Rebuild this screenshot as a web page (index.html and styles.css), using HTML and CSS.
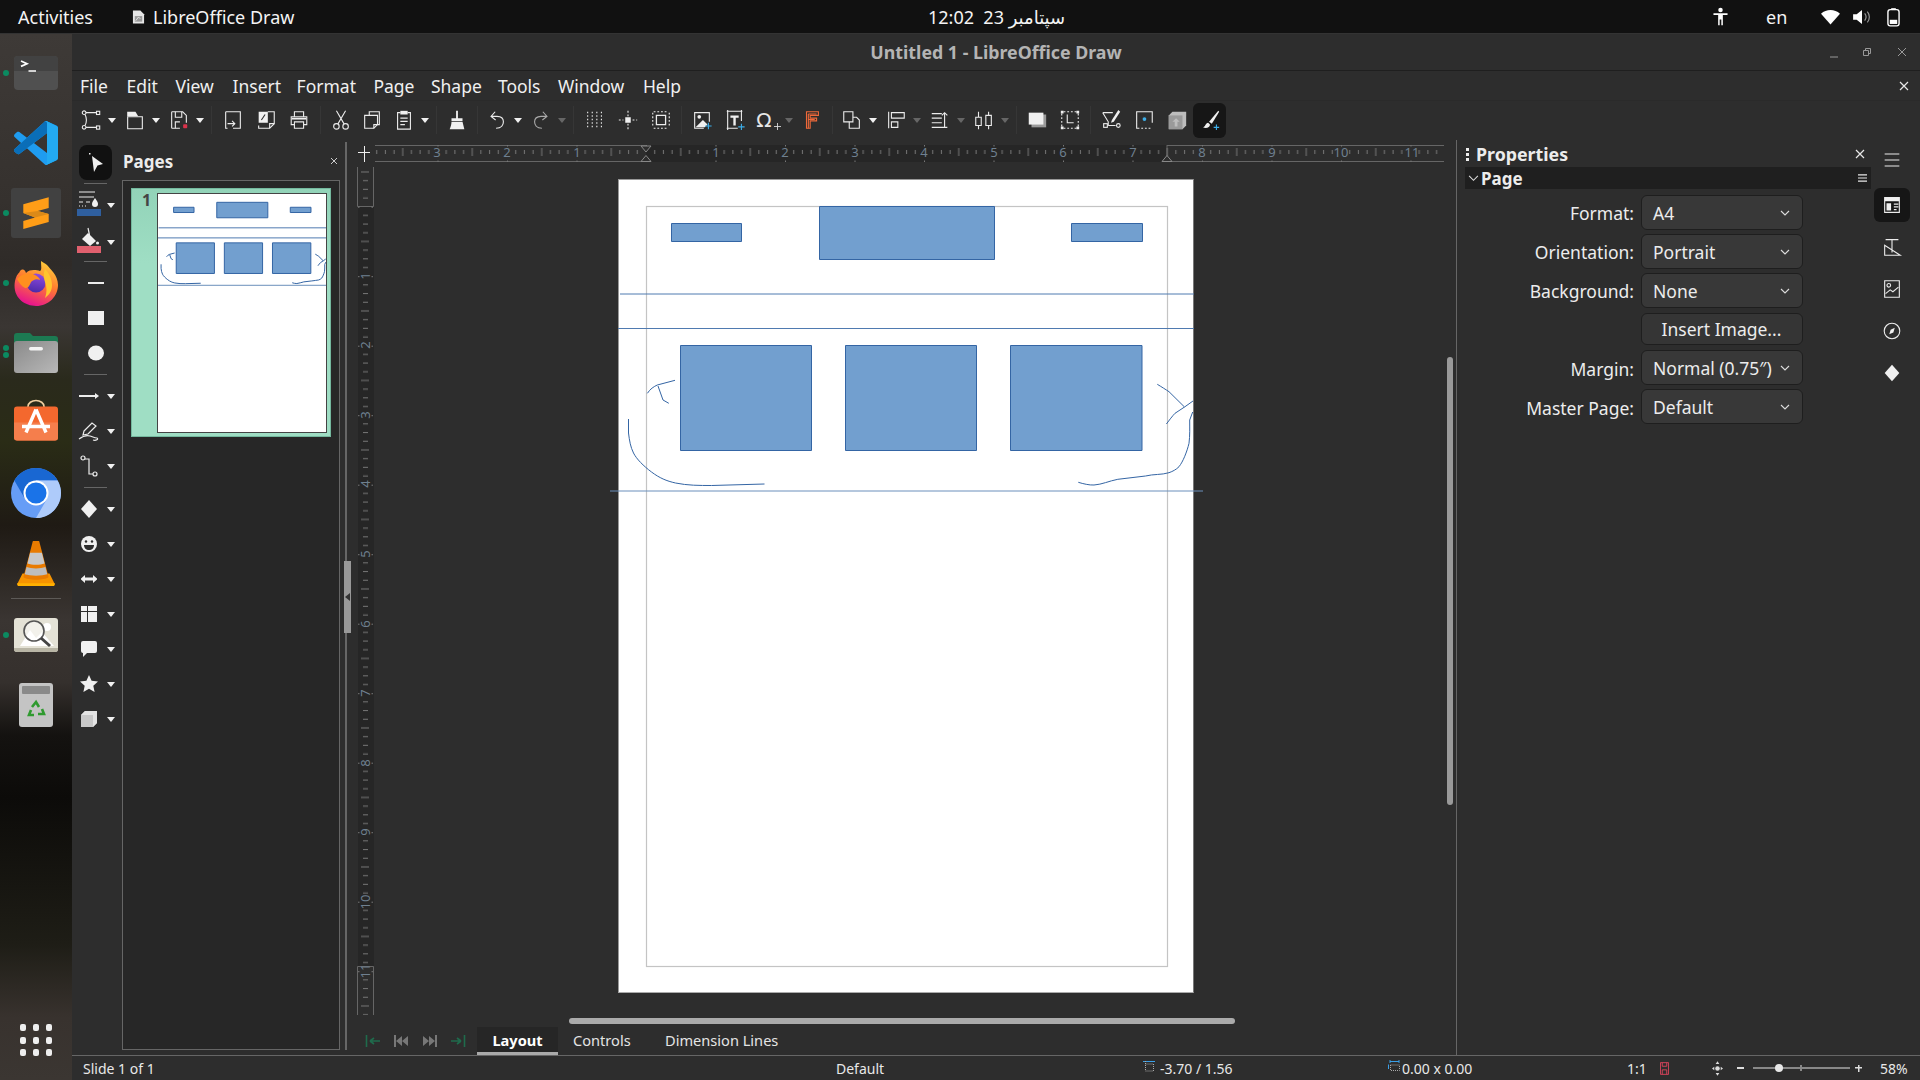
FILE: index.html
```html
<!DOCTYPE html>
<html lang="en">
<head>
<meta charset="utf-8">
<title>Untitled 1 - LibreOffice Draw</title>
<link rel="stylesheet" href="styles.css">
</head>
<body>
<header class="topbar">
  <span class="activities">Activities</span>
  <span class="appname">
    <svg class="appicon" viewBox="0 0 14 16"><path d="M1 1h8l4 4v10H1z" fill="#e6e6e6"/><path d="M3 7h8v6H3z" fill="#9a9a9a"/><path d="M4 12l3-4 2 2" stroke="#e6e6e6" fill="none"/></svg>
    LibreOffice Draw
  </span>
  <span class="clock">12:02&nbsp; 23 سپتامبر</span>
  <div class="tray">
    <svg class="tray-person" viewBox="0 0 16 20"><circle cx="8" cy="3" r="2.4" fill="#fff"/><path d="M0.5 6.5h15v1.8h-5v11h-1.6v-6h-1.8v6H5.5v-11h-5z" fill="#fff"/></svg>
    <span class="tray-lang">en</span>
    <svg class="tray-wifi" viewBox="0 0 20 16"><path d="M0 4.5C5.5-.5 14.500-.5 20 4.500L10 16z" fill="#fff"/></svg>
    <svg class="tray-vol" viewBox="0 0 20 18"><path d="M0 6h4l6-5v16l-6-5H0z" fill="#fff"/><path d="M13 5c2 2.500 2 5.500 0 8M16 3c3 3.500 3 8.500 0 12" stroke="#999" fill="none" stroke-width="1.300"/></svg>
    <svg class="tray-batt" viewBox="0 0 14 20"><path d="M4.500 0.500h5v2h-5z" fill="#fff"/><rect x="1" y="2" width="12" height="17.500" rx="2.500" fill="none" stroke="#fff" stroke-width="1.500"/><rect x="3" y="13" width="8" height="4.500" fill="#fff"/></svg>
  </div>
</header>

<div class="desktop">
  <nav class="dock">
    <div class="dock-item">
      <i class="dock-dot"></i>
      <svg class="di-44" viewBox="0 0 44 34"><rect width="44" height="34" rx="4" fill="#505050"/><path d="M0 15V4a4 4 0 0 1 4-4h36a4 4 0 0 1 4 4v11z" fill="#424242"/><path d="M7 5l6 2.700-6 2.700M14.500 15h7.500" stroke="#fff" stroke-width="1.700" fill="none"/></svg>
    </div>
    <div class="dock-item">
      <svg class="di-44" viewBox="0 0 100 100"><path fill-rule="evenodd" d="M70.9 99.300c1.600.6 3.400.6 5-.2l20.600-9.900c2.100-1 3.500-3.200 3.500-5.600V16.400c0-2.400-1.400-4.600-3.500-5.600L75.900.9c-2.100-1-4.600-.8-6.400.5-.3.200-.5.400-.7.700L29.400 38 12.200 25c-1.600-1.200-3.800-1.100-5.300.2l-5.500 5c-1.800 1.700-1.800 4.500 0 6.200L16.200 50 1.400 63.600c-1.800 1.600-1.800 4.500 0 6.100l5.500 5c1.500 1.400 3.700 1.500 5.300.3l17.200-13 39.400 35.900c.6.600 1.300 1.100 2.100 1.400zM75 27.300L45.100 50 75 72.700z" fill="#1f9cf0"/><path d="M96.500 10.800L75.900.9c-2.400-1.200-5.300-.7-7.100 1.200L1.300 63.600c-1.800 1.600-1.800 4.500 0 6.100l5.500 5c1.500 1.400 3.700 1.500 5.300.3L93.400 13.400c2.700-2.100 6.600-.100 6.600 3.300v-.300c0-2.400-1.400-4.600-3.500-5.600z" fill="#0a6eb8"/><path d="M75.900 99.100c-2.400 1.200-5.300.7-7.100-1.200 2.300 2.300 6.200.7 6.200-2.600V4.700c0-3.300-3.900-4.900-6.200-2.600 1.800-1.900 4.700-2.400 7.100-1.200l20.600 9.900c2.100 1 3.500 3.200 3.500 5.600v67.200c0 2.400-1.400 4.600-3.500 5.600z" fill="#23aaf2"/></svg>
    </div>
    <div class="dock-item">
      <i class="dock-dot"></i>
      <svg class="di-50" viewBox="0 0 50 50"><rect width="50" height="50" rx="3" fill="#414141"/><path d="M12.300 16.300L37.700 9.300V20L26.700 23L37.700 26V34L12.300 41V33L24 29.500L12.300 25z" fill="#ff9d17"/><path d="M12.300 25L26.700 23L37.700 26L24 29.500z" fill="#dc8a18"/></svg>
    </div>
    <div class="dock-item">
      <i class="dock-dot"></i>
      <svg class="di-44x" viewBox="0 0 44 45">
        <defs>
          <linearGradient id="ffg" x1=".8" y1="0" x2=".4" y2="1"><stop offset="0" stop-color="#ffd43a"/><stop offset=".5" stop-color="#ff7a30"/><stop offset="1" stop-color="#e6128f"/></linearGradient>
          <linearGradient id="ffp" x1=".6" y1="0" x2=".4" y2="1"><stop offset="0" stop-color="#8f4be0"/><stop offset="1" stop-color="#4b2aa8"/></linearGradient>
        </defs>
        <path d="M6 10C5 13 3 12 1 20C-2 36 10 45 22 45C35 45 44 35 44 24C44 14 36 8 33 4C31 2 28 1 27 0C27 5 28 9 26 10C22 9 16 8 12 12C11 9 9 7 6 10z" fill="url(#ffg)"/>
        <circle cx="22" cy="22" r="9.500" fill="url(#ffp)"/>
        <path d="M3 18C7 13 15 11 21 14C25 16 26 18 26 19C22 17 19 19 17 21C15 26 14 27 11 27C7 25 5 21 3 18z" fill="#ff8f1f"/>
        <path d="M31 8c4 4 7 10 7 16 0 6-3 10-7 13 2-5 2-11 0-16-1-4-2-8 0-13z" fill="#ffc52e"/>
      </svg>
    </div>
    <div class="dock-item dock-item-files">
      <i class="dock-dot dock-dot-up"></i><i class="dock-dot dock-dot-down"></i>
      <svg class="di-44" viewBox="0 0 44 40">
        <defs><linearGradient id="filesg" x1="0" y1="0" x2="1" y2="1"><stop offset="0" stop-color="#8a8a8a"/><stop offset="1" stop-color="#b8b8b8"/></linearGradient></defs>
        <path d="M0 3a3 3 0 0 1 3-3h13l3 3h22a3 3 0 0 1 3 3v8H0z" fill="#1c7a52"/><path d="M0 11a3 3 0 0 1 3-3h38a3 3 0 0 1 3 3v26a3 3 0 0 1-3 3H3a3 3 0 0 1-3-3z" fill="url(#filesg)"/><rect x="15" y="14" width="14" height="3.500" rx="1.700" fill="#f4f4f4"/>
      </svg>
    </div>
    <div class="dock-item dock-item-store">
      <svg class="di-44x" viewBox="0 0 44 42"><path d="M14 10V7a8 6 0 0 1 16 0v3" stroke="#f0cfa0" stroke-width="1.600" fill="none"/><rect y="7" width="44" height="34" rx="3" fill="#f4682e"/><path d="M0 23h44v15a3 3 0 0 1-3 3H3a3 3 0 0 1-3-3z" fill="#f57e4c"/><path d="M22 10L12 33M22 10l10 23M8 27h28" stroke="#fff" stroke-width="3.400" fill="none"/></svg>
    </div>
    <div class="dock-item">
      <svg class="di-50" viewBox="0 0 50 50"><circle cx="25" cy="25" r="25" fill="#669df6"/><path d="M3.350 12.500A25 25 0 0 1 46.650 12.500H25L14.200 31.250z" fill="#1967d2"/><path d="M46.650 12.500A25 25 0 0 1 25 50L35.800 31.250 25 12.500z" fill="#aecbfa"/><circle cx="25" cy="25" r="12.500" fill="#fff"/><circle cx="25" cy="25" r="10.500" fill="#1a73e8"/></svg>
    </div>
    <div class="dock-item">
      <svg class="di-44x" viewBox="0 0 42 50"><path d="M6 36L0 48l1 2h40l1-2-6-12z" fill="#f79400"/><path d="M0 47h42l-1 3H1z" fill="#ffb000"/><path d="M17 2a4 3 0 0 1 8 0l10 38c-4 4-24 4-28 0z" fill="#e97b00"/><path d="M14.500 13h13l3 12c-5 2-14 2-19 0z" fill="#c8c8c8"/><path d="M10.500 29c5 2 16 2 21 0l2 8c-6 2-19 2-25 0z" fill="#bdbdbd"/></svg>
    </div>
    <div class="dock-sep"></div>
    <div class="dock-item">
      <i class="dock-dot"></i>
      <svg class="di-44" viewBox="0 0 44 34"><rect width="44" height="34" rx="3" fill="#e4e2d6"/><path d="M0 30h44v1a3 3 0 0 1-3 3H3a3 3 0 0 1-3-3z" fill="#b9b6a6"/><path d="M6 28l10-16 6 8 6-6 12 14z" fill="#fff"/><circle cx="33" cy="9" r="4" fill="#fff"/><circle cx="20" cy="13" r="10" fill="#ffffff80" stroke="#555" stroke-width="1.600"/><path d="M27 20l9 8" stroke="#444" stroke-width="3"/></svg>
    </div>
    <div class="dock-item">
      <svg class="di-34" viewBox="0 0 34 44"><rect width="34" height="44" rx="3" fill="#c4c4c4"/><rect x="3" y="3" width="28" height="8" rx="1" fill="#8a8a8a"/><g fill="none" stroke="#2f9a2f" stroke-width="2.600"><path d="M13 24l4-5 3 5"/><path d="M23 26l2 5h-6"/><path d="M15 32h-5l2-5"/></g></svg>
    </div>
    <div class="dock-grid">
      <i></i><i></i><i></i><i></i><i></i><i></i><i></i><i></i><i></i>
    </div>
  </nav>

  <div class="window">
    <div class="titlebar">
      <span></span>
      <span class="title">Untitled 1 - LibreOffice Draw</span>
      <div class="wincontrols">
        <svg viewBox="0 0 10 10" class="wc wc-min"><path d="M1 8h8" stroke="#999"/></svg>
        <svg viewBox="0 0 10 10" class="wc wc-max"><path d="M1.500 3.500h5v5h-5zM3.500 3V1.500h5v5H7" stroke="#999" fill="none"/></svg>
        <svg viewBox="0 0 10 10" class="wc wc-close"><path d="M1 1l8 8M9 1l-8 8" stroke="#999"/></svg>
      </div>
    </div>

    <div class="menubar">
      <span class="m">File</span><span class="m">Edit</span><span class="m">View</span><span class="m">Insert</span><span class="m">Format</span><span class="m">Page</span><span class="m">Shape</span><span class="m">Tools</span><span class="m">Window</span><span class="m">Help</span>
      <svg viewBox="0 0 10 10" class="menu-close"><path d="M1 1l8 8M9 1l-8 8" stroke="#e8e8e8" stroke-width="1.200"/></svg>
    </div>

    <div class="toolbar">
      <button class="tb"><svg class="ic" viewBox="0 0 24 24"><circle cx="4.500" cy="4" r="2"/><rect x="18" y="2.500" width="3.500" height="3.500"/><circle cx="4.500" cy="20" r="2"/><rect x="18" y="18.500" width="3.500" height="3.500"/><path d="M6.500 4H18M6.500 20H18M5.500 6c2 4 2 8 0 12"/></svg></button><i class="dd"></i>
      <button class="tb"><svg class="ic" viewBox="0 0 24 24"><path d="M4 8.500h16v13H4z"/><path class="f" d="M3.500 3h9l3 5h-12z"/></svg></button><i class="dd"></i>
      <button class="tb"><svg class="ic" viewBox="0 0 24 24"><path d="M4 3h12l4 4v8M13 21H4zM4 3v18"/><path d="M8 3v6h7V3M8 21v-7h5"/><rect class="red" x="16.500" y="16.500" width="4.500" height="4.500" rx="1"/></svg></button><i class="dd"></i>
      <i class="sep sep-10"></i>
      <button class="tb"><svg class="ic" viewBox="0 0 24 24"><path d="M4 3h16v18h-8M4 3v18h2"/><path d="M4 15h8m-3-3l3 3-3 3" transform="translate(2 1)"/></svg></button>
      <button class="tb"><svg class="ic" viewBox="0 0 24 24"><path d="M14 3h7v13l-5 5H4v-3"/><path d="M16 21v-5h5"/><path class="f" d="M4 3h10v12H4z"/><path d="M7 12l4-6" class="dk"/></svg></button>
      <button class="tb"><svg class="ic" viewBox="0 0 24 24"><path d="M7 8V3h10v5M7 17H3.500V8.500h17V17H17"/><path d="M7 14h10v7H7z"/><path class="f" d="M4 9.500h16v2H4z"/></svg></button>
      <i class="sep"></i>
      <button class="tb"><svg class="ic" viewBox="0 0 24 24"><circle cx="7" cy="19" r="3"/><circle cx="17" cy="19" r="3"/><path d="M8.500 16.500L17 2M15.500 16.500L7 2"/></svg></button>
      <button class="tb tb-30"><svg class="ic" viewBox="0 0 24 24"><path d="M9 7V3h11v14h-2"/><path d="M4 7h14v10l-4 4H4z"/><path d="M14 21v-4h4"/></svg></button>
      <button class="tb"><svg class="ic" viewBox="0 0 24 24"><path d="M8 4H5v18h14V4h-3"/><path class="f" d="M8 2h8v4H8z"/><path d="M8 10h8M8 13.500h8M8 17h5"/></svg></button><i class="dd"></i>
      <i class="sep"></i>
      <button class="tb"><svg class="ic" viewBox="0 0 24 24"><path class="f" d="M11 2h2v8h5v3H6v-3h5zM6 14h12l2 8H4c1-2 2-5 2-8z"/></svg></button>
      <i class="sep sep-7"></i>
      <button class="tb"><svg class="ic" viewBox="0 0 24 24"><path d="M10 3L5.500 8l5 4M6 8h6c5 0 7 3 7 6s-2 7-8 7"/></svg></button><i class="dd"></i>
      <button class="tb"><svg class="ic ic-dim" viewBox="0 0 24 24"><path d="M14 3l4.500 5-5 4M18 8h-6c-5 0-7 3-7 6s2 7 8 7"/></svg></button><i class="dd dd-dim"></i>
      <i class="sep sep-10"></i>
      <button class="tb"><svg class="ic ic-dots" viewBox="0 0 24 24"><path d="M4 3v18M9 3v18M14 3v18M19 3v18"/></svg></button>
      <button class="tb"><svg class="ic" viewBox="0 0 24 24"><rect class="f" x="9" y="9" width="6" height="6"/><path class="dash" d="M12 2v6M12 16v6M2 12h5M17 12h5"/></svg></button>
      <button class="tb"><svg class="ic" viewBox="0 0 24 24"><path d="M7 7h10v10H7z" stroke-width="1.400"/><path class="dash" d="M4 3h16M4 21h16M3 4v16M21 4v16"/></svg></button>
      <i class="sep sep-8"></i>
      <button class="tb"><svg class="ic" viewBox="0 0 24 24"><path d="M20 14V4H4v17h10"/><circle class="f" cx="9" cy="8.500" r="2"/><path class="f" d="M5 20l8-8 5 5-3 3z"/><path class="blue" d="M19 15v7M15.500 18.500h7"/></svg></button>
      <button class="tb"><svg class="ic" viewBox="0 0 24 24"><path d="M3 2.500h17M3 21h12M4 1v22M19 1v12"/><path d="M7 7h9v2.500h-3.200V18h-2.600V9.500H7z" class="f"/><path class="blue" d="M19 16v7M15.500 19.500h7"/></svg></button>
      <button class="tb tb-omega"><span class="omega">Ω</span><svg class="omega-plus" viewBox="0 0 8 8"><path d="M4 0v8M0 4h8" stroke="#ddd"/></svg></button><i class="dd dd-dim"></i>
      <button class="tb"><svg class="ic ic-orange" viewBox="0 0 24 24"><path d="M6 3h13v4h-9v3h7v3h-7v8H6z"/><path d="M8 5.500h9M8 5.500V21M8 11.500h7"/></svg></button>
      <i class="sep sep-7"></i>
      <button class="tb"><svg class="ic" viewBox="0 0 24 24"><path d="M3 3h10v11H3z"/><path d="M13 9h4l3 3v9H9v-7"/></svg></button><i class="dd"></i>
      <button class="tb"><svg class="ic" viewBox="0 0 24 24"><path d="M4 3v18"/><path d="M7 4h14v6H7zM7 14h7v6H7z"/></svg></button><i class="dd dd-dim"></i>
      <button class="tb"><svg class="ic" viewBox="0 0 24 24"><path d="M3 5h11M3 10h11M3 15h11M3 20h17M17 20V4m-3 3l3-3 3 3"/></svg></button><i class="dd dd-dim"></i>
      <button class="tb"><svg class="ic" viewBox="0 0 24 24"><path d="M3 9h6v9H3zM14 7h6v11h-6zM6 3v6M6 18v4M17 3v4M17 18v4"/></svg></button><i class="dd dd-dim"></i>
      <i class="sep"></i>
      <button class="tb"><svg class="ic" viewBox="0 0 24 24"><path class="g" d="M6 6h16v14H6z"/><path class="f" d="M3 4h16v13H3z"/></svg></button>
      <button class="tb"><svg class="ic" viewBox="0 0 24 24"><path class="dash" d="M5 3h14M5 21h14M3 5v14M21 5v14"/><path d="M9 6v9h7"/><path class="f" d="M2 2h3v3H2zM19 2h3v3h-3zM2 19h3v3H2zM19 19h3v3h-3z"/></svg></button>
      <i class="sep sep-8"></i>
      <button class="tb"><svg class="ic" viewBox="0 0 24 24"><path d="M3 4h11M3 4l6 10v4M9 18h8"/><rect x="4" y="16" width="4" height="4"/><circle cx="20" cy="18" r="2"/><path class="f" d="M20 1l2 2-7 11-3 1 1-3z"/></svg></button>
      <button class="tb"><svg class="ic" viewBox="0 0 24 24"><path d="M21 15V3H4v18h3"/><circle cx="12.500" cy="11" r="2.700" class="bluefill"/><path class="dash" d="M9 21h12"/></svg></button>
      <button class="tb"><svg class="ic" viewBox="0 0 24 24"><path class="gl" d="M3 7l4-4h15v15l-4 4H3z"/><path class="g2" d="M3 7h15v15H3z"/><path class="gl" d="M11 10l4 4h-2.500v5h-3v-5H7z"/></svg></button>
      <button class="tb tb-active"><svg class="ic" viewBox="0 0 24 24"><path class="f" d="M21 2l1 1-8 13-3-2z"/><path class="f" d="M4 20c3 0 3-5 6-5l2 2c0 3-4 5-8 3z"/><path class="blue" d="M19 17v6M16 20h6"/></svg></button>
    </div>

    <div class="main">
      <aside class="tools">
        <button class="tool tool-select"><svg class="ic" viewBox="0 0 24 24"><path class="f" d="M8 5l11 8-5.500 1.500L10 21z"/><rect class="f" x="5" y="2" width="1.500" height="1.500"/></svg></button>
        <i class="tool-sep"></i>
        <div class="tool tool-swatch"><svg class="ic" viewBox="0 0 24 24"><path d="M2 2h16M2 7h15M2 12h4M9 12h4M2 16h1M5 16h1M8 16h1"/><path class="f" d="M18 8c2 3 3 4 3 6a3 3 0 0 1-6 0c0-2 1-3 3-6z"/></svg><i class="swatch swatch-blue"></i><i class="dd"></i></div>
        <div class="tool tool-swatch"><svg class="ic" viewBox="0 0 24 24"><path d="M11 1l1.500 7"/><path class="f" d="M11 6l8 8-6 5-8-7z"/><circle class="f" cx="20.500" cy="16" r="1.500"/></svg><i class="swatch swatch-red"></i><i class="dd"></i></div>
        <i class="tool-sep"></i>
        <div class="tool tool-c"><svg class="ic" viewBox="0 0 24 24"><path class="thick" d="M4 12h16"/></svg></div>
        <div class="tool tool-c"><svg class="ic" viewBox="0 0 24 24"><path class="f" d="M4 5h16v14H4z"/></svg></div>
        <div class="tool tool-c"><svg class="ic" viewBox="0 0 24 24"><ellipse class="f" cx="12" cy="12" rx="8" ry="7.500"/></svg></div>
        <i class="tool-sep"></i>
        <div class="tool"><svg class="ic" viewBox="0 0 24 24"><path class="thick" d="M2 12h18"/><path class="f" d="M18 9l4 3-4 3z"/></svg><i class="dd"></i></div>
        <div class="tool"><svg class="ic" viewBox="0 0 24 24"><path d="M7 12l8-8 4 3-8 8-5 1z"/><path d="M2 20c4-3 8-4 11-3s5 2 7 2c2 1-1 3-4 2"/></svg><i class="dd"></i></div>
        <div class="tool"><svg class="ic" viewBox="0 0 24 24"><circle cx="6" cy="4" r="2"/><circle cx="18" cy="20" r="2"/><path d="M8 5h4v15h4"/></svg><i class="dd"></i></div>
        <i class="tool-sep"></i>
        <div class="tool"><svg class="ic" viewBox="0 0 24 24"><path class="f" d="M12 3l8 9-8 9-8-9z"/></svg><i class="dd"></i></div>
        <div class="tool"><svg class="ic" viewBox="0 0 24 24"><circle class="f" cx="12" cy="12" r="8"/><circle cx="9" cy="9.500" r="1.200" class="dkf"/><circle cx="15" cy="9.500" r="1.200" class="dkf"/><path class="dkf" d="M7 13h10c0 3-2 5-5 5s-5-2-5-5z"/></svg><i class="dd"></i></div>
        <div class="tool"><svg class="ic" viewBox="0 0 24 24"><path class="f" d="M4 11.500L8 8v2.500h8V8l4 3.500v1L16 16v-2.500H8V16l-4-3.500z"/></svg><i class="dd"></i></div>
        <div class="tool"><svg class="ic" viewBox="0 0 24 24"><path class="f" d="M4 4h6v5H4zM11 4h9v5h-9zM4 10h6v10H4zM11 10h9v10h-9z"/></svg><i class="dd"></i></div>
        <div class="tool"><svg class="ic" viewBox="0 0 24 24"><path class="f" d="M6 4h12a2 2 0 0 1 2 2v8a2 2 0 0 1-2 2h-8l-4 4v-4a2 2 0 0 1-2-2V6a2 2 0 0 1 2-2z"/></svg><i class="dd"></i></div>
        <div class="tool"><svg class="ic" viewBox="0 0 24 24"><path class="f" d="M12 3l2.600 5.800 6.400.7-4.700 4.300 1.300 6.200-5.600-3.200L6.400 20l1.300-6.200L3 9.500l6.400-.7z"/></svg><i class="dd"></i></div>
        <div class="tool"><svg class="ic" viewBox="0 0 24 24"><path class="g3" d="M4 8l4-4h12v12l-4 4H4z"/><path class="g4" d="M4 8l4-4h12l-4 4zM16 8l4-4v12l-4 4z"/></svg><i class="dd"></i></div>
      </aside>

      <section class="pages">
        <div class="pages-head"><b>Pages</b><svg viewBox="0 0 10 10" class="x-small"><path d="M2 2l6 6M8 2l-6 6" stroke="#ccc"/></svg></div>
        <div class="pages-list">
          <div class="thumb">
            <span class="thumb-num">1</span>
            <div class="thumb-page">
              <svg class="thumb-svg" viewBox="618 179 576 814"><use href="#drawing"/></svg>
            </div>
          </div>
        </div>
      </section>

      <div class="splitter"><span class="grip"><i class="tri-l"></i></span></div>

      <section class="work">
        <div class="hruler-row">
          <svg class="corner" viewBox="0 0 14 18"><path d="M0 7.500h12M6.500 1v16" stroke="#eee"/></svg>
          <svg class="hruler" viewBox="375 145 1069 17">
            <defs>
              <pattern id="ht" patternUnits="userSpaceOnUse" x="646" y="145" width="69.500" height="17">
                <g class="rt"><path d="M8.700 5v4M17.400 5v4M26.100 5v4M34.750 3v8M43.400 5v4M52.100 5v4M60.800 5v4M.5 0v1.500M.5 15.500V17"/></g>
              </pattern>
              <pattern id="vt" patternUnits="userSpaceOnUse" x="357" y="206.700" width="17" height="69.500">
                <g class="rt"><path d="M6 8.700h5M6 17.400h5M6 26.100h5M4 34.750h8M6 43.400h5M6 52.100h5M6 60.800h5M1 .5h1.500M14.500 .5H16"/></g>
              </pattern>
            </defs>
            <rect class="rul-dark" x="646" y="145" width="521" height="17"/>
            <path class="rul-line" d="M375 145.500H646M375 161.500H646M1167 145.500H1444M1167 161.500H1444M1167 145V162"/>
            <rect fill="url(#ht)" x="375" y="145" width="1069" height="17"/>
            <path class="hour" d="M641 146h10l-5 6zM641 161.500h10l-5-6z"/>
            <path class="hour" d="M1162 161.500h10l-5-6z"/>
            <g class="rnum">
              <text x="437" y="157">3</text><text x="507" y="157">2</text><text x="577" y="157">1</text>
              <text x="716" y="157">1</text><text x="785" y="157">2</text><text x="855" y="157">3</text><text x="924" y="157">4</text><text x="994" y="157">5</text><text x="1063" y="157">6</text><text x="1133" y="157">7</text><text x="1202" y="157">8</text><text x="1272" y="157">9</text><text x="1341" y="157">10</text><text x="1412" y="157">11</text>
            </g>
          </svg>
        </div>

        <div class="work-mid">
          <svg class="vruler" viewBox="357 167 17 848">
            <rect class="rul-dark" x="358" y="206.700" width="16" height="759.300"/>
            <path class="rul-line" d="M357.500 167V206.500H373.500V167M357.500 1015V966.500H373.500V1015"/>
            <rect fill="url(#vt)" x="357" y="167" width="17" height="848"/>
            <g class="rnum">
              <text transform="translate(370 276) rotate(-90)">1</text>
              <text transform="translate(370 345) rotate(-90)">2</text>
              <text transform="translate(370 415) rotate(-90)">3</text>
              <text transform="translate(370 484) rotate(-90)">4</text>
              <text transform="translate(370 554) rotate(-90)">5</text>
              <text transform="translate(370 624) rotate(-90)">6</text>
              <text transform="translate(370 693) rotate(-90)">7</text>
              <text transform="translate(370 763) rotate(-90)">8</text>
              <text transform="translate(370 832) rotate(-90)">9</text>
              <text transform="translate(370 902) rotate(-90)">10</text>
              <text transform="translate(370 971) rotate(-90)">11</text>
            </g>
          </svg>
          <div class="canvas">
            <div class="page">
              <svg class="page-svg" viewBox="618 179 576 814">
                <rect class="margin-rect" x="646.500" y="206.500" width="521" height="760"/>
                <g id="drawing">
                  <g class="shape">
                    <rect x="671.500" y="223.500" width="70" height="18"/>
                    <rect x="819.500" y="206.500" width="175" height="53"/>
                    <rect x="1071.500" y="223.500" width="71" height="18"/>
                    <rect x="680.500" y="345.500" width="131" height="105"/>
                    <rect x="845.500" y="345.500" width="131" height="105"/>
                    <rect x="1010.500" y="345.500" width="131.500" height="105"/>
                  </g>
                  <g class="ink">
                    <path class="ln" d="M620 294H1194"/>
                    <path class="ln" d="M618 328.500H1194"/>
                    <path class="ln ln-out" d="M610 491H1203"/>
                    <path d="M628.500 419v14c1 8 2 14 5 20s10 13 18 19c8 6 15 9 24 11 12 2.500 24 2.500 36 2.500l53-1.500"/>
                    <path d="M647.400 393.300C650 389 654 386.500 657.300 385L675 380.300"/>
                    <path d="M658 386l5 14 5.800 3.300"/>
                    <path d="M1157.300 384.300c5 3 8 5 11.700 7.400l15.200 15"/>
                    <path d="M1166.400 424c3-4 6-8 8.600-10.700l10-6.600 8-5.700"/>
                    <path d="M1078.300 482.300c5 1.500 11 3 15.700 2.700 8-.5 15-4 23.800-5.700l27.700-3.300c8-2 16-1 23.500-3.300 4-1.500 7-3 10-6 4-5 8-15 10-23.400 1-8 .7-15 .7-23.300l3-8"/>
                  </g>
                </g>
              </svg>
            </div>
            <i class="vscroll"></i>
            <i class="hscroll"></i>
          </div>
        </div>

        <div class="tabs">
          <svg class="nav nav-first" viewBox="0 0 16 14"><path d="M1.500 1v12M5 7h10M5 7l4-3M5 7l4 3" stroke="#1f6b4c" stroke-width="1.600" fill="none"/></svg>
          <svg class="nav nav-prev" viewBox="0 0 16 14"><path d="M1 1h2v12H1zM3 7l6-5v10zM9 7l6-5v10z" fill="#777"/></svg>
          <svg class="nav nav-next" viewBox="0 0 16 14"><path d="M15 1h-2v12h2zM13 7L7 2v10zM7 7L1 2v10z" fill="#777"/></svg>
          <svg class="nav nav-last" viewBox="0 0 16 14"><path d="M14.500 1v12M11 7H1M11 7L7 4M11 7l-4 3" stroke="#1f6b4c" stroke-width="1.600" fill="none"/></svg>
          <span class="tab tab-active">Layout</span>
          <span class="tab tab-controls">Controls</span>
          <span class="tab tab-dim">Dimension Lines</span>
        </div>
      </section>

      <aside class="sidebar">
        <div class="deck">
          <div class="deck-head">
            <span class="deck-dots"><i></i><i></i><i></i></span>
            <b>Properties</b>
            <svg viewBox="0 0 10 10" class="x-deck"><path d="M1 1l8 8M9 1l-8 8" stroke="#e8e8e8" stroke-width="1.200"/></svg>
          </div>
          <div class="panel-head">
            <svg class="chev-head" viewBox="0 0 12 8"><path d="M1 1l5 5 5-5" stroke="#ddd" fill="none" stroke-width="1.200"/></svg>
            <b>Page</b>
            <svg class="ham-small" viewBox="0 0 10 10"><path d="M0 1.500h10M0 5h10M0 8.500h10" stroke="#e8e8e8" stroke-width="1.200"/></svg>
          </div>
          <div class="form">
            <label>Format:</label><div class="combo">A4<svg viewBox="0 0 10 6"><path d="M1 1l4 4 4-4"/></svg></div>
            <label>Orientation:</label><div class="combo">Portrait<svg viewBox="0 0 10 6"><path d="M1 1l4 4 4-4"/></svg></div>
            <label>Background:</label><div class="combo">None<svg viewBox="0 0 10 6"><path d="M1 1l4 4 4-4"/></svg></div>
            <label></label><div class="combo combo-btn">Insert Image...</div>
            <label>Margin:</label><div class="combo combo-up">Normal (0.75″)<svg viewBox="0 0 10 6"><path d="M1 1l4 4 4-4"/></svg></div>
            <label>Master Page:</label><div class="combo combo-up">Default<svg viewBox="0 0 10 6"><path d="M1 1l4 4 4-4"/></svg></div>
          </div>
        </div>
        <div class="sidetabs">
          <button class="st st-menu"><svg class="ic" viewBox="0 0 24 24"><path d="M4 5.500h16M4 12h16M4 18.500h16"/></svg></button>
          <button class="st st-active"><svg class="ic" viewBox="0 0 24 24"><path d="M4 4h16v16H4z"/><path class="f" d="M4 4h16v4H4zM6 10h5v8H6z"/><path d="M14 11h5M14 14h5M14 17h3"/></svg></button>
          <button class="st"><svg class="ic" viewBox="0 0 24 24"><path d="M5 4h14M12 4v14M4 21h17L4 10z"/></svg></button>
          <button class="st"><svg class="ic" viewBox="0 0 24 24"><path d="M4 3h16v18H4z"/><circle cx="8.500" cy="8" r="2"/><path d="M5 17l5-4 3 2 6-5"/></svg></button>
          <button class="st"><svg class="ic" viewBox="0 0 24 24"><circle cx="12" cy="12" r="8.500"/><path class="f" d="M15 8.500l-1.500 5L9 15.500l1.500-5z"/></svg></button>
          <button class="st"><svg class="ic" viewBox="0 0 24 24"><path class="f" d="M12 3l8 9-8 9-8-9z"/></svg></button>
        </div>
      </aside>
    </div>

    <footer class="status">
      <span class="s-slide">Slide 1 of 1</span>
      <span class="s-style">Default</span>
      <svg class="s-ic s-ic-pos" viewBox="0 0 12 12"><path d="M0 1.500h12" stroke="#3aa0e8"/><path d="M2.500 1v10h8V4h-8" stroke="#aaa" stroke-dasharray="1 1" fill="none"/></svg>
      <span class="s-pos">-3.70 / 1.56</span>
      <svg class="s-ic s-ic-size" viewBox="0 0 12 12"><path d="M2 1.500h9M2 0v3M11 0v3M.5 5v4M0 5h1" stroke="#3aa0e8" fill="none"/><path d="M2.500 5h9v5.500h-9z" stroke="#aaa" stroke-dasharray="1 1" fill="none"/></svg>
      <span class="s-size">0.00 x 0.00</span>
      <span class="s-scale">1:1</span>
      <svg class="s-save" viewBox="0 0 10 14"><path d="M.5.500h9v13h-9zM2.500.500v4h5v-4M2.500 13.500v-5h5v5" stroke="#e0455e" fill="none"/></svg>
      <svg class="s-fit" viewBox="0 0 12 16"><path d="M6 0l2 3H4zM6 16l-2-3h4zM0 8l2.500-2v4zM12 8l-2.500-2v4z" fill="#ddd"/><circle cx="6" cy="8" r="2.500" fill="#ddd"/></svg>
      <div class="zoomer">
        <span class="z-minus"></span>
        <span class="z-track"><i class="z-tick"></i><i class="z-thumb"></i></span>
        <span class="z-plus"></span>
      </div>
      <span class="s-zoom">58%</span>
    </footer>
  </div>
</div>
</body>
</html>
```
FILE: styles.css
```css
* { box-sizing: border-box; }
html, body { margin: 0; height: 100%; }
body {
  width: 1920px; height: 1080px; overflow: hidden;
  display: flex; flex-direction: column;
  background: #2d2d2d; color: #ececec;
  font-family: "Noto Sans", "DejaVu Sans", sans-serif;
  font-size: 16px;
}
i { display: block; font-style: normal; }
button { background: none; border: 0; padding: 0; margin: 0; color: inherit; font: inherit; }

/* top bar */
.topbar { height: 34px; flex: none; display: flex; align-items: center; background: #111; border-bottom: 1px solid #333; color: #f4f4f4; font-size: 18px; }
.activities { margin-left: 18px; width: 114px; }
.appname { display: flex; align-items: center; gap: 8px; width: 796px; }
.appicon { width: 13px; height: 16px; }
.clock { width: 138px; white-space: nowrap; }
.tray { margin-left: auto; display: flex; align-items: center; }
.tray-person { width: 15px; height: 19px; margin-right: 38px; }
.tray-lang { width: 55px; }
.tray-wifi { width: 19px; height: 16px; margin-right: 13px; }
.tray-vol { width: 18px; height: 16px; margin-right: 16px; }
.tray-batt { width: 13px; height: 20px; margin-right: 20px; }

.desktop { flex: 1; display: flex; min-height: 0; }

/* dock */
.dock {
  width: 72px; flex: none; padding-top: 4px;
  display: flex; flex-direction: column; align-items: center;
  background: linear-gradient(180deg, #3e3a37 0%, #35312e 16%, #2f2b28 22%, #3a3633 28%, #2a2a1c 33%, #2a2c16 39%, #1f1a14 47%, #3a3532 56%, #35302d 62%, #141210 67%, #0c0b09 73%, #1e1d16 87%, #38322e 94%, #3b3632 100%);
}
.dock-item { width: 72px; height: 70px; flex: none; display: flex; align-items: center; justify-content: center; position: relative; }
.dock-item-store { padding-bottom: 6px; }
.dock-dot { position: absolute; left: 3px; top: 32px; width: 6px; height: 6px; border-radius: 50%; background: #0b8a60; }
.dock-dot-up { top: 27px; }
.dock-dot-down { top: 34px; }
.di-44 { width: 44px; height: auto; }
.di-44x { width: 44px; height: 45px; }
.di-50 { width: 50px; height: 50px; }
.di-34 { width: 34px; height: 44px; }
.dock-sep { width: 50px; height: 1px; background: #5d5a57; margin: 0 0 1px; flex: none; }
.dock-grid { margin-top: auto; margin-bottom: 24px; display: grid; grid-template-columns: repeat(3, 12.700px); row-gap: 5.500px; width: 38px; justify-items: center; }
.dock-grid i { width: 6px; height: 7px; border-radius: 2px; background: #eee; }

/* window */
.window { flex: 1; min-width: 0; display: flex; flex-direction: column; background: #2d2d2d; }
.titlebar { height: 37px; flex: none; display: grid; grid-template-columns: 1fr auto 1fr; align-items: center; border-bottom: 1px solid #1f1f1f; }
.title { font-weight: 700; font-size: 17.800px; color: #b4b4b4; }
.wincontrols { justify-self: end; display: flex; align-items: center; }
.wc { width: 10px; height: 10px; }
.wc-min { margin-right: 23px; margin-top: 4px; }
.wc-max { margin-right: 25px; }
.wc-close { margin-right: 13px; }

.menubar { height: 30px; flex: none; display: grid; grid-template-columns: 46.500px 49px 57px 64.100px 76.800px 57.500px 67px 60px 85px 1fr auto; align-items: center; padding-left: 8px; border-bottom: 1px solid #2a2a2a; font-size: 17.500px; }
.m { color: #f0f0f0; }
.menu-close { width: 10px; height: 10px; margin-right: 11px; }

.toolbar { height: 39px; flex: none; display: flex; align-items: center; padding-left: 2.200px; padding-bottom: 1px; }
.tb { width: 33px; height: 35px; flex: none; display: flex; align-items: center; justify-content: center; border-radius: 6px; }
.tb .ic { width: 22px; height: 22px; }
.tb-30 { width: 30px; }
.tb-active { background: #161616; }
.tb-omega { position: relative; justify-content: flex-start; padding-left: 5px; }
.omega { font-size: 20px; line-height: 1; color: #e6e6e6; font-family: "DejaVu Sans", sans-serif; }
.omega-plus { width: 7px; height: 7px; position: absolute; right: 3px; bottom: 8px; }
.dd { width: 11px; height: 5px; flex: none; position: relative; }
.dd::before { content: ""; position: absolute; left: 1px; top: 0; border: solid transparent; border-width: 5px 4.500px 0; border-top-color: #f0f0f0; }
.dd-dim::before { border-top-color: #666; }
.sep { width: 9px; height: 28px; flex: none; position: relative; }
.sep::before { content: ""; position: absolute; left: 50%; top: 0; bottom: 0; width: 1px; background: #363636; }
.sep-7 { width: 7px; }
.sep-8 { width: 8px; }
.sep-10 { width: 10px; }

.ic { width: 24px; height: 24px; fill: none; stroke: #ececec; stroke-width: 1.200; flex: none; }
.ic .f { fill: #f0f0f0; stroke: none; }
.ic .g { fill: #9a9a9a; stroke: none; }
.ic .gl { fill: #bdbdbd; stroke: none; }
.ic .g2 { fill: #9a9a9a; stroke: none; }
.ic .g3 { fill: #c8c8c8; stroke: none; }
.ic .g4 { fill: #e4e4e4; stroke: none; }
.ic .red { fill: #d8324a; stroke: none; }
.ic .dk { stroke: #2d2d2d; }
.ic .dkf { fill: #2d2d2d; stroke: none; }
.ic .blue { stroke: #3daee9; }
.ic .bluefill { fill: #3daee9; stroke: #2d2d2d; }
.ic .thick { stroke-width: 2; }
.ic .dash { stroke-dasharray: 2 2; }
.ic-dots { stroke-dasharray: 1.600 2.200; }
.ic-dim { stroke: #aaa; }
.ic-orange { stroke: #f0693a; }

/* main area */
.main { flex: 1; min-height: 0; display: flex; }
.tools { width: 50px; flex: none; display: flex; flex-direction: column; padding-top: 5px; }
.tool { height: 35px; flex: none; display: flex; align-items: center; padding-left: 5px; position: relative; }
.tool-c { padding-left: 11.500px; }
.tool .dd { margin-left: 5px; }
.tool-select { width: 33px; margin-left: 7px; padding-left: 5px; background: #111; border-radius: 8px; }
.tool-sep { height: 1px; width: 23px; margin: 3.500px 0 3.500px 12px; background: #666; flex: none; }
.tool-select + .tool-sep { margin-top: 3px; margin-bottom: 3px; }
.tool-swatch + .tool-sep { margin-top: 0; }
.tool-swatch { height: 37px; }
.tool-swatch .ic { margin-top: -8px; }
.swatch { position: absolute; left: 5px; width: 24px; height: 7px; bottom: 8px; }
.swatch-blue { background: #2f5f9f; }
.swatch-red { background: #e0606e; }

.pages { width: 223px; flex: none; display: flex; flex-direction: column; }
.pages-head { height: 40px; flex: none; display: flex; align-items: center; padding: 2px 6px 0 1px; justify-content: space-between; font-size: 17px; }
.x-small { width: 10px; height: 10px; }
.pages-list { width: 218px; flex: 1; margin-bottom: 5px; background: #272727; border: 1px solid #666; padding: 7px 8px; }
.thumb { width: 200px; height: 249px; background: linear-gradient(#92d3b8, #9fdec4 30%); border: 1px solid #74b89e; position: relative; padding: 4px 4px 4px 25px; }
.thumb-num { position: absolute; left: 10px; top: 0; font-weight: 700; font-size: 16px; color: #444; }
.thumb-page { width: 170px; height: 240px; background: #fff; border: 1px solid #444; overflow: hidden; }
.thumb-svg { display: block; width: 168px; height: 238px; }

.splitter { width: 6px; flex: none; position: relative; }
.splitter::before { content: ""; position: absolute; left: 0; top: 2px; bottom: 5px; width: 2px; background: #666; }
.grip { position: absolute; left: -1px; top: 421px; width: 7px; height: 72px; background: #999; display: flex; align-items: center; justify-content: center; }
.tri-l { border: solid transparent; border-width: 4px 5px 4px 0; border-right-color: #333; }

.work { flex: 1; min-width: 0; display: flex; flex-direction: column; }
.hruler-row { height: 22px; flex: none; padding-top: 5px; display: flex; position: relative; }
.corner { width: 14px; height: 18px; margin-left: 7px; margin-right: 3px; flex: none; }
.hruler { width: 1069px; height: 17px; flex: none; overflow: visible; }
.rul-dark { fill: #262626; }
.rul-line { stroke: #666; fill: none; }
.hour { fill: #2d2d2d; stroke: #888; }
.rt path { stroke: #777; fill: none; }
.rnum text { fill: #6f8090; font-size: 13px; text-anchor: middle; font-family: "Noto Sans", sans-serif; }

.work-mid { flex: 1; min-height: 0; display: flex; position: relative; }
.vruler { width: 17px; height: 848px; margin-left: 6px; margin-top: 5px; flex: none; overflow: visible; }
.canvas { flex: 1; min-width: 0; position: relative; padding: 17px 0 0 244px; }
.page { width: 576px; height: 814px; background: #fff; border-top: 1px solid #999; border-left: 1px solid #999; border-bottom: 1px solid #aaa; border-right: 1px solid #777; }
.page-svg { display: block; width: 576px; height: 814px; overflow: visible; margin: -1px 0 0 -1px; }
.margin-rect { fill: none; stroke: #c4c4c4; stroke-width: 1.200; }
.shape rect { fill: #729fcf; stroke: #3465a4; stroke-width: 1; vector-effect: non-scaling-stroke; }
.ink path { fill: none; stroke: #3465a4; stroke-width: 1; vector-effect: non-scaling-stroke; }
.ink .ln { stroke: #4f7ab0; }
.ink .ln-out { stroke: #6a8fbb; }
.vscroll { position: absolute; left: 1073px; top: 195px; width: 6px; height: 448px; background: #9a9a9a; border-radius: 3px; }
.hscroll { position: absolute; left: 195px; top: 856px; width: 666px; height: 6px; background: #aaa; border-radius: 3px; }

.tabs { height: 28px; flex: none; display: flex; align-items: stretch; font-size: 14.600px; }
.nav { width: 16px; height: 14px; flex: none; align-self: center; }
.nav-first { margin-left: 14px; }
.nav-prev { margin-left: 12px; }
.nav-next { margin-left: 13px; }
.nav-last { margin-left: 12px; margin-right: 11px; }
.tab { display: flex; align-items: center; color: #e4e4e4; padding-bottom: 3px; }
.tab-active { width: 81px; justify-content: center; font-weight: 700; background: #262626; color: #fff; border-bottom: 3px solid #aaa; padding-bottom: 0; }
.tab-controls { margin-left: 15px; width: 92px; }

.sidebar { width: 464px; flex: none; display: flex; border-left: 1px solid #666; }
.deck { width: 414px; flex: none; padding-left: 8px; }
.deck-head { height: 27px; display: flex; align-items: center; padding: 1px 0 0 1px; font-size: 17.800px; }
.deck-dots { width: 3px; display: flex; flex-direction: column; gap: 2px; margin-right: 7px; }
.deck-dots i { width: 2.500px; height: 3px; background: #eee; }
.x-deck { width: 10px; height: 10px; margin-left: auto; margin-right: 6px; }
.panel-head { height: 22px; background: #1f1f1f; display: flex; align-items: center; padding: 0 4px 0 3px; font-size: 17px; }
.chev-head { width: 11px; height: 7px; margin-right: 2px; }
.ham-small { width: 9px; height: 10px; margin-left: auto; }
.form { display: grid; grid-template-columns: 169px 162px; column-gap: 7px; margin-top: 6px; row-gap: 4px; font-size: 17.500px; grid-auto-rows: 35px; }
.form label { text-align: right; align-self: center; }
.combo { background: #383838; border: 1px solid #1e1e1e; border-radius: 6px; display: flex; align-items: center; padding: 0 12px 0 11px; justify-content: space-between; white-space: nowrap; }
.combo svg { width: 10px; height: 6px; fill: none; stroke: #ddd; stroke-width: 1.100; flex: none; }
.combo-btn { justify-content: center; height: 32px; margin-top: 1px; background: #353535; }
.combo-up { height: 35px; margin-top: -1px; }
.sidetabs { width: 49px; flex: none; display: flex; flex-direction: column; align-items: flex-start; padding: 4px 0 0 3px; }
.st { width: 36px; height: 34px; display: flex; align-items: center; justify-content: center; margin-bottom: 8px; border-radius: 6px; }
.st .ic { width: 22px; height: 22px; }
.st-menu { margin-bottom: 12px; height: 32px; }
.st-active { background: #161616; }

.status { height: 25px; flex: none; display: flex; align-items: center; border-top: 1px solid #666; font-size: 14px; color: #e8e8e8; }
.s-slide { margin-left: 11px; width: 753px; }
.s-style { width: 307px; }
.s-ic { width: 12px; height: 12px; flex: none; margin-top: -5px; }
.s-pos { margin-left: 5px; width: 228px; }
.s-size { margin-left: 2px; width: 225px; }
.s-scale { width: 33px; }
.s-save { width: 9px; height: 13px; margin-right: 43px; }
.s-fit { width: 11px; height: 15px; }
.zoomer { display: flex; align-items: center; margin-left: 14px; }
.z-minus { width: 7px; height: 1.500px; background: #ddd; margin-right: 9px; }
.z-track { width: 97px; height: 2px; background: #888; position: relative; display: block; }
.z-tick { position: absolute; left: 47px; top: -2px; width: 2px; height: 6px; background: #888; }
.z-thumb { position: absolute; left: 22px; top: -3px; width: 8px; height: 8px; border-radius: 50%; background: #e8e8e8; }
.z-plus { width: 7px; height: 7px; margin-left: 5px; background: linear-gradient(#ddd, #ddd) center / 100% 1.500px no-repeat, linear-gradient(#ddd, #ddd) center / 1.500px 100% no-repeat; }
.s-zoom { margin-left: 18px; }
```
